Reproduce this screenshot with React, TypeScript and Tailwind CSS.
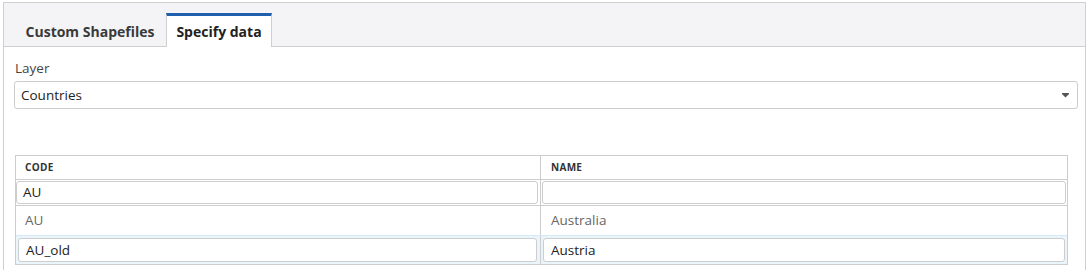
import React from "react";

export default function App() {
  return (
    <div className="w-[1091px] h-[270px] bg-white overflow-hidden font-['Open_Sans',sans-serif] text-[#333]">
      <div className="ml-[3px] mt-[2px] w-[1083px] h-[268px] border-l border-t border-r border-[#cfcfcf]">
        {/* Tab bar */}
        <div className="h-[44px] bg-[#f4f4f7] border-b border-[#cfcfcf] flex items-end pl-[10px]">
          <div className="h-[33px] w-[152px] flex items-center justify-center text-[14px] font-bold text-[#3a3a3a] -mb-px pt-[1px]">
            Custom Shapefiles
          </div>
          <div className="h-[34px] w-[106px] bg-white border-l border-r border-[#cfcfcf] border-t-[3px] border-t-[#1f5fae] flex items-center justify-center text-[14px] font-bold text-[#222] -mb-px">
            Specify data
          </div>
        </div>
        {/* Content */}
        <div className="pl-[10px] pr-[7px]">
          <div className="pt-[12px] pl-[1px] text-[13.5px] leading-[18px] text-[#444]">Layer</div>
          <div className="mt-[4px] h-[28px] border border-[#cdcdcd] rounded-[3px] flex items-center justify-between pl-[6px] pr-[8px] text-[13.5px] text-[#222]">
            <span>Countries</span>
            <svg width="7" height="5" viewBox="0 0 7 5" className="mt-[1px]">
              <path d="M0 0H7V1L3.5 4.5L0 1Z" fill="#555" />
            </svg>
          </div>
          {/* Table */}
          <div className="mt-[46px] ml-[1px] w-[1053px] border border-[#cdcdcd]">
            <div className="grid grid-cols-[525px_1fr] h-[24px] border-b border-[#cdcdcd] text-[10px] font-bold text-[#333] tracking-[0.3px]">
              <div className="flex items-center pl-[9px] border-r border-[#cdcdcd]">CODE</div>
              <div className="flex items-center pl-[10px]">NAME</div>
            </div>
            <div className="grid grid-cols-[525px_1fr] h-[26px] border-b border-[#cdcdcd]">
              <div className="border-r border-[#cdcdcd] py-[1px] pr-[2px]">
                <div className="h-full border border-[#cdcdcd] rounded-[3px] flex items-center pl-[6px] text-[13.5px] text-[#222]">AU</div>
              </div>
              <div className="py-[1px] pl-[1px] pr-[1px]">
                <div className="h-full border border-[#cdcdcd] rounded-[3px]"></div>
              </div>
            </div>
            <div className="grid grid-cols-[525px_1fr] h-[30px] border-b border-[#cdcdcd] text-[13.5px] text-[#666]">
              <div className="flex items-center pl-[9px] border-r border-[#cdcdcd]">AU</div>
              <div className="flex items-center pl-[10px]">Australia</div>
            </div>
            <div className="grid grid-cols-[525px_1fr] h-[29px] bg-[#eaf4fb] border-t border-[#d6e8f5] -mt-px">
              <div className="border-r border-[#cdcdcd] py-[2px] pl-[2px] pr-[3px]">
                <div className="h-full bg-white border border-[#cdcdcd] rounded-[3px] flex items-center pl-[7px] text-[13.5px] text-[#222]">AU_old</div>
              </div>
              <div className="py-[2px] pl-[2px] pr-[2px]">
                <div className="h-full bg-white border border-[#cdcdcd] rounded-[3px] flex items-center pl-[7px] text-[13.5px] text-[#222]">Austria</div>
              </div>
            </div>
          </div>
        </div>
      </div>
    </div>
  );
}
